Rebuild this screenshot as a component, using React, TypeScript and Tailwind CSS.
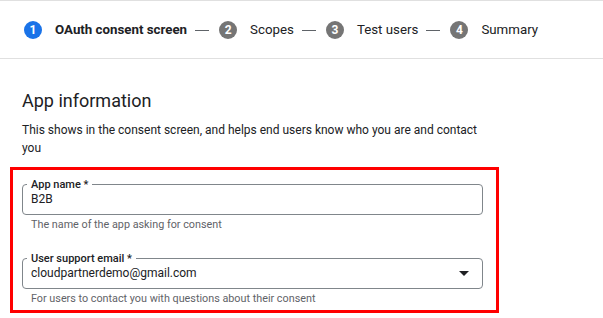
import React from 'react';

const steps = [
  { n: 1, label: 'OAuth consent screen', active: true },
  { n: 2, label: 'Scopes', active: false },
  { n: 3, label: 'Test users', active: false },
  { n: 4, label: 'Summary', active: false },
];

const Stepper: React.FC = () => (
  <div className="flex h-[59px] items-center border-y border-[#e0e0e0] pl-[24px] pt-[1px]">
    {steps.map((s, i) => (
      <React.Fragment key={s.n}>
        {i > 0 && <div className="ml-[8px] mr-[10px] h-px w-[14px] bg-[#5f6368]" />}
        <div className="flex items-center">
          <span
            className={`flex h-[18px] w-[18px] items-center justify-center rounded-full text-[12px] font-bold text-white ${
              s.active ? 'bg-[#1a73e8]' : 'bg-[#757575]'
            }`}
          >
            {s.n}
          </span>
          <span
            className={`ml-[13px] text-[13.3px] text-[#202124] ${s.active ? 'font-bold' : 'font-normal'}`}
          >
            {s.label}
          </span>
        </div>
      </React.Fragment>
    ))}
  </div>
);

type FieldProps = {
  label: string;
  value: string;
  hint: string;
  select?: boolean;
};

const Field: React.FC<FieldProps> = ({ label, value, hint, select }) => (
  <div className="w-[461px]">
    <fieldset className="h-[37px] rounded-[4px] border border-[#80868b] pl-[4px] pr-[12px]">
      <legend className="px-[4px] text-[11px] font-medium leading-[13px] text-[#202124]">{label}</legend>
      <div className="-mt-[1px] flex items-center justify-between pl-[4px]">
        <span className="text-[12px] leading-[18px] text-[#202124]">{value}</span>
        {select && (
          <svg width="10" height="5" viewBox="0 0 10 5" className="mr-[1px]">
            <polygon points="0,0 10,0 5,5" fill="#202124" />
          </svg>
        )}
      </div>
    </fieldset>
    <p className="mt-[3px] pl-[9px] text-[10.8px] leading-[14px] text-[#5f6368]">{hint}</p>
  </div>
);

export default function App() {
  return (
    <div className="h-[318px] w-[603px] overflow-hidden bg-white" style={{ fontFamily: 'Roboto, "Liberation Sans", sans-serif' }}>
      <Stepper />
      <div className="px-[22px] pt-[30px]">
        <h2 className="text-[18px] font-normal leading-[24px] text-[#202124]">App information</h2>
        <p className="mt-[8px] max-w-[462px] text-[12px] leading-[18px] text-[#202124]">
          This shows in the consent screen, and helps end users know who you are and contact you
        </p>
        <div className="-ml-[12px] mt-[10px] w-[489px] border-[3px] border-[#ff0000] pb-[4px] pl-[9px] pt-[8px]">
          <Field label="App name *" value="B2B" hint="The name of the app asking for consent" />
          <div className="mt-[20px]">
            <Field
              label="User support email *"
              value="cloudpartnerdemo@gmail.com"
              hint="For users to contact you with questions about their consent"
              select
            />
          </div>
        </div>
      </div>
    </div>
  );
}
